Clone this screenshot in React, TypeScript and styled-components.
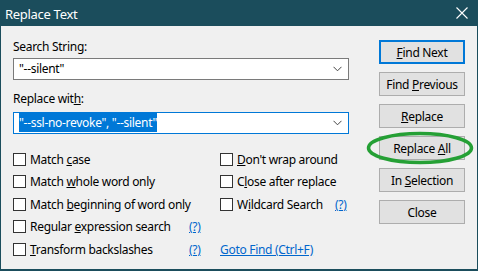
import React from 'react';
import styled, { createGlobalStyle } from 'styled-components';

const GlobalStyle = createGlobalStyle`
  html, body {
    margin: 0;
    padding: 0;
    background: #f0f0f0;
  }
  body {
    font-family: 'Noto Sans', 'Segoe UI', sans-serif;
    font-size: 12px;
    letter-spacing: -0.3px;
    color: #000;
  }
`;

// 왼쪽 옵션 목록 (체크박스 + 도움말 링크)
const leftOptions = [
  { before: 'Match ', key: 'c', after: 'ase', help: false },
  { before: 'Match ', key: 'w', after: 'hole word only', help: false },
  { before: 'Match ', key: 'b', after: 'eginning of word only', help: false },
  { before: 'Regular ', key: 'e', after: 'xpression search', help: true },
  { before: '', key: 'T', after: 'ransform backslashes', help: true },
];

const buttons = [
  { before: '', key: 'F', after: 'ind Next', isDefault: true },
  { before: 'Find ', key: 'P', after: 'revious' },
  { before: '', key: 'R', after: 'eplace' },
  { before: 'Replace ', key: 'A', after: 'll' },
  { before: 'In ', key: 'S', after: 'election' },
  { before: 'Close', key: '', after: '' },
];

const Label = ({ before, k, after }: { before: string; k: string; after: string }) => (
  <span>
    {before}
    {k && <u>{k}</u>}
    {after}
  </span>
);

const Chevron = () => (
  <svg width="9" height="6" viewBox="0 0 9 6">
    <path d="M0.5 0.8 L4.5 4.8 L8.5 0.8" fill="none" stroke="#444" strokeWidth="1" />
  </svg>
);

const App = () => {
  return (
    <Window>
      <GlobalStyle />
      <TitleBar>
        <Title>Replace Text</Title>
        <CloseX>
          <svg width="12" height="12" viewBox="0 0 12 12">
            <path d="M0.5 0.5 L11.5 11.5 M11.5 0.5 L0.5 11.5" stroke="#fff" strokeWidth="1.1" />
          </svg>
        </CloseX>
      </TitleBar>

      <Content>
        <LeftPanel>
          <FieldLabel>Search String:</FieldLabel>
          <Combo>
            <ComboText>"--silent"</ComboText>
            <Chevron />
          </Combo>

          <FieldLabel $gap={11}>
            Replace wit<u>h</u>:
          </FieldLabel>
          <Combo $focused>
            <ComboText>
              <Selected>"--ssl-no-revoke", "--silent"</Selected>
            </ComboText>
            <Chevron />
          </Combo>

          <Options>
            <OptionCell>
              <Box />
              <Label before={leftOptions[0].before} k={leftOptions[0].key} after={leftOptions[0].after} />
            </OptionCell>
            <span />
            <OptionCell>
              <Box />
              <Label before="" k="D" after="on't wrap around" />
            </OptionCell>
            <span />

            <OptionCell>
              <Box />
              <Label before={leftOptions[1].before} k={leftOptions[1].key} after={leftOptions[1].after} />
            </OptionCell>
            <span />
            <OptionCell>
              <Box />
              <Label before="C" k="l" after="ose after replace" />
            </OptionCell>
            <span />

            <OptionCell>
              <Box />
              <Label before={leftOptions[2].before} k={leftOptions[2].key} after={leftOptions[2].after} />
            </OptionCell>
            <span />
            <OptionCell>
              <Box />
              <Label before="W" k="i" after="ldcard Search" />
            </OptionCell>
            <HelpLink>(?)</HelpLink>

            <OptionCell>
              <Box />
              <Label before={leftOptions[3].before} k={leftOptions[3].key} after={leftOptions[3].after} />
            </OptionCell>
            <HelpLink>(?)</HelpLink>
            <span />
            <span />

            <OptionCell>
              <Box />
              <Label before={leftOptions[4].before} k={leftOptions[4].key} after={leftOptions[4].after} />
            </OptionCell>
            <HelpLink>(?)</HelpLink>
            <GotoLink>Goto Find (Ctrl+F)</GotoLink>
            <span />
          </Options>
        </LeftPanel>

        <ButtonColumn>
          {buttons.map((b, i) => (
            <DialogButton key={i} $isDefault={!!b.isDefault}>
              <Label before={b.before} k={b.key} after={b.after} />
            </DialogButton>
          ))}
        </ButtonColumn>
      </Content>

      {/* 스크린샷 위에 그려진 초록색 강조 표시 */}
      <Highlight width="110" height="36" viewBox="0 0 110 36">
        <ellipse cx="55" cy="18" rx="51.5" ry="14.5" fill="none" stroke="#25a035" strokeWidth="3.5" />
      </Highlight>
    </Window>
  );
};

const Window = styled.div`
  position: relative;
  width: 478px;
  height: 271px;
  box-sizing: border-box;
  border: 1px solid #1b4d5c;
  border-bottom-width: 2px;
  background: #f0f0f0;
  overflow: hidden;
`;

const TitleBar = styled.div`
  height: 25px;
  background: #1b4d5c;
  display: flex;
  align-items: center;
  justify-content: space-between;
  padding: 0 9px 0 4px;
`;

const Title = styled.div`
  color: #fff;
  font-size: 13px;
`;

const CloseX = styled.div`
  display: flex;
  align-items: center;
  padding-bottom: 1px;
`;

const Content = styled.div`
  display: flex;
  padding: 13px 12px 0 12px;
`;

const LeftPanel = styled.div`
  width: 336px;
  display: flex;
  flex-direction: column;
`;

const FieldLabel = styled.div<{ $gap?: number }>`
  height: 16px;
  line-height: 16px;
  margin-top: ${(p) => p.$gap ?? 0}px;
`;

const Combo = styled.div<{ $focused?: boolean }>`
  margin-top: ${(p) => (p.$focused ? 5 : 3)}px;
  height: 22px;
  box-sizing: border-box;
  background: #fff;
  border: 1px solid ${(p) => (p.$focused ? '#0078d7' : '#7a7a7a')};
  display: flex;
  align-items: center;
  justify-content: space-between;
  padding: 0 6px 0 5px;
`;

const ComboText = styled.div`
  line-height: 18px;
`;

const Selected = styled.span`
  background: #0078d7;
  color: #fff;
  padding: 1px 0;
`;

const Options = styled.div`
  margin-top: 14px;
  display: grid;
  grid-template-columns: 176px 31px 115px 1fr;
  grid-auto-rows: 22.5px;
  align-items: center;
`;

const OptionCell = styled.label`
  display: flex;
  align-items: center;
  gap: 4px;
  white-space: nowrap;
`;

const Box = styled.span`
  width: 13px;
  height: 13px;
  box-sizing: border-box;
  border: 1px solid #333;
  background: #fff;
  flex-shrink: 0;
`;

const HelpLink = styled.a`
  color: #0066cc;
  text-decoration: underline;
`;

const GotoLink = styled(HelpLink)`
  grid-column: 3 / span 2;
`;

const ButtonColumn = styled.div`
  margin-left: 30px;
  padding-top: 1px;
  width: 86px;
  display: flex;
  flex-direction: column;
  gap: 8px;
`;

const DialogButton = styled.button<{ $isDefault: boolean }>`
  height: 24px;
  box-sizing: border-box;
  padding: 0;
  font-family: inherit;
  font-size: 12px;
  letter-spacing: inherit;
  color: #000;
  background: #e1e1e1;
  border: ${(p) => (p.$isDefault ? '2px solid #0078d7' : '1px solid #adadad')};
`;

const Highlight = styled.svg`
  position: absolute;
  left: 364px;
  top: 129px;
  pointer-events: none;
`;

export default App;
